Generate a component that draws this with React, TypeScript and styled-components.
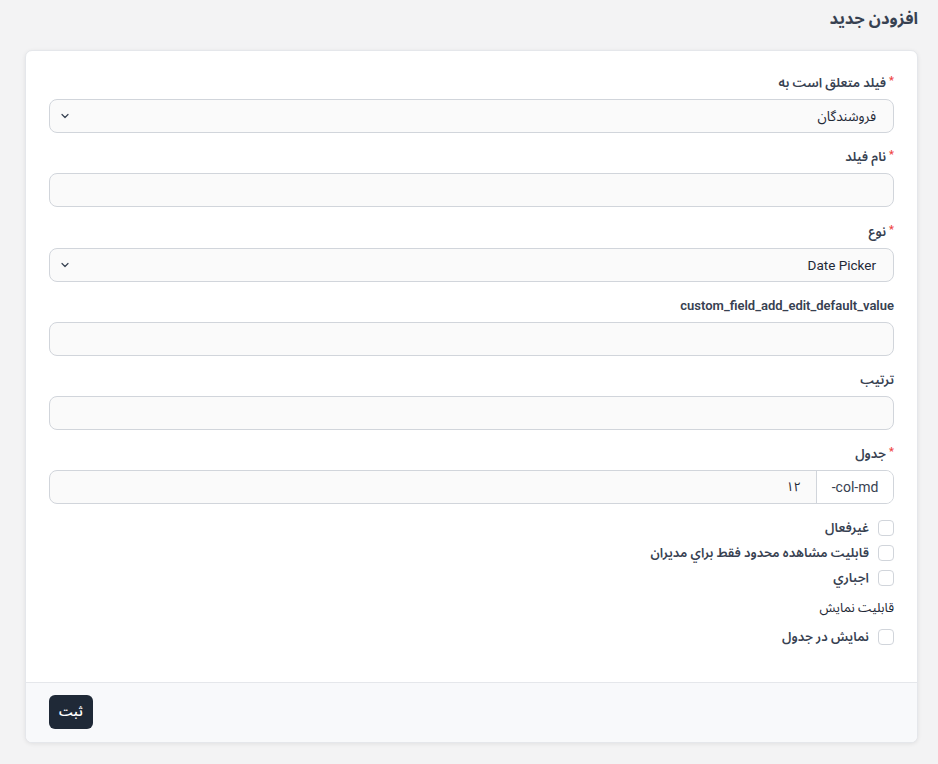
import styled, { createGlobalStyle } from "styled-components";

const GlobalStyle = createGlobalStyle`
  html, body {
    margin: 0;
    padding: 0;
    background: #f3f3f4;
  }
  body {
    font-family: Roboto, "Noto Sans Arabic", "Noto Sans Arabic UI", "Noto Naskh Arabic", "DejaVu Sans", sans-serif;
    color: #374151;
  }
  * {
    box-sizing: border-box;
  }
`;

type Field =
  | { kind: "select"; label: string; required?: boolean; value: string }
  | { kind: "input"; label: string; required?: boolean }
  | { kind: "group"; label: string; required?: boolean; addon: string; value: string };

const fields: Field[] = [
  { kind: "select", label: "فیلد متعلق است به", required: true, value: "فروشندگان" },
  { kind: "input", label: "نام فیلد", required: true },
  { kind: "select", label: "نوع", required: true, value: "Date Picker" },
  { kind: "input", label: "custom_field_add_edit_default_value" },
  { kind: "input", label: "ترتیب" },
  { kind: "group", label: "جدول", required: true, addon: "col-md-", value: "۱۲" },
];

const flags = ["غیرفعال", "قابلیت مشاهده محدود فقط براي مديران", "اجباري"];

const Chevron = () => (
  <svg width="12" height="12" viewBox="0 0 24 24" fill="none" stroke="#374151" strokeWidth="2.4" strokeLinecap="round" strokeLinejoin="round">
    <path d="M6 9l6 6 6-6" />
  </svg>
);

export default function App() {
  return (
    <>
      <GlobalStyle />
      <Page dir="rtl">
        <PageTitle>افزودن جدید</PageTitle>
        <Card>
          <CardBody>
            {fields.map((f) => (
              <FormRow key={f.label}>
                <Label>
                  {f.required && <Star>*</Star>}
                  {f.label}
                </Label>
                {f.kind === "select" && (
                  <SelectBox>
                    <span>{f.value}</span>
                    <Chevron />
                  </SelectBox>
                )}
                {f.kind === "input" && <TextInput />}
                {f.kind === "group" && (
                  <InputGroup>
                    <Addon>{f.addon}</Addon>
                    <GroupValue>{f.value}</GroupValue>
                  </InputGroup>
                )}
              </FormRow>
            ))}
            <CheckList>
              {flags.map((name) => (
                <CheckRow key={name}>
                  <Box />
                  <CheckText>{name}</CheckText>
                </CheckRow>
              ))}
            </CheckList>
            <SectionLabel>قابلیت نمایش</SectionLabel>
            <CheckRow>
              <Box />
              <CheckText>نمایش در جدول</CheckText>
            </CheckRow>
          </CardBody>
          <CardFooter>
            <SubmitButton>ثبت</SubmitButton>
          </CardFooter>
        </Card>
      </Page>
    </>
  );
}

const Page = styled.div`
  padding: 0 20px 22px 25px;
`;

const PageTitle = styled.h2`
  margin: 0;
  height: 50px;
  padding-top: 7px;
  font-size: 16.5px;
  font-weight: 700;
  line-height: 24px;
  color: #374151;
`;

const Card = styled.div`
  background: #ffffff;
  border: 1px solid #e5e7eb;
  border-radius: 7px;
  box-shadow: 0 1px 4px rgba(0, 0, 0, 0.08);
  overflow: hidden;
`;

const CardBody = styled.div`
  padding: 23px 23px 37px 23px;
`;

const FormRow = styled.div`
  display: flex;
  flex-direction: column;
  gap: 7px;
  margin-bottom: 15.3px;
`;

const Label = styled.label`
  display: flex;
  align-items: flex-start;
  gap: 3px;
  height: 18px;
  font-size: 13px;
  font-weight: 600;
  line-height: 18px;
  color: #374151;
`;

const Star = styled.span`
  color: #ef4444;
  font-size: 11px;
  line-height: 14px;
`;

const fieldBase = `
  height: 34px;
  flex: none;
  width: 100%;
  background: #fafafa;
  border: 1px solid #d1d5db;
  border-radius: 8px;
  font-size: 13.5px;
  color: #1f2937;
`;

const SelectBox = styled.div`
  ${fieldBase}
  display: flex;
  align-items: center;
  justify-content: space-between;
  padding: 0 17px 0 9px;
`;

const TextInput = styled.div`
  ${fieldBase}
`;

const InputGroup = styled.div`
  ${fieldBase}
  display: flex;
  align-items: stretch;
  overflow: hidden;
`;

const Addon = styled.div`
  width: 77px;
  display: flex;
  align-items: center;
  justify-content: center;
  background: #ffffff;
  border-left: 1px solid #d1d5db;
  font-size: 14px;
  color: #374151;
`;

const GroupValue = styled.div`
  flex: 1;
  display: flex;
  align-items: center;
  padding: 0 15px;
  font-size: 13px;
`;

const CheckList = styled.div`
  display: flex;
  flex-direction: column;
  gap: 9px;
  margin-top: 1px;
`;

const CheckRow = styled.div`
  display: flex;
  align-items: center;
  gap: 9px;
  height: 16px;
`;

const Box = styled.span`
  width: 16px;
  height: 16px;
  border: 1px solid #d1d5db;
  border-radius: 4px;
  background: #ffffff;
  flex: none;
`;

const CheckText = styled.span`
  font-size: 13px;
  font-weight: 600;
  color: #374151;
`;

const SectionLabel = styled.div`
  margin: 13px 0 12px;
  font-size: 13px;
  line-height: 18px;
  color: #1f2937;
`;

const CardFooter = styled.div`
  display: flex;
  justify-content: flex-end;
  background: #f8f9fb;
  border-top: 1px solid #e5e7eb;
  padding: 12px 23px 13px;
`;

const SubmitButton = styled.button`
  height: 34px;
  padding: 0 10px;
  border: none;
  border-radius: 6px;
  background: #1f2937;
  color: #ffffff;
  font-family: inherit;
  font-size: 13px;
  font-weight: 600;
`;
